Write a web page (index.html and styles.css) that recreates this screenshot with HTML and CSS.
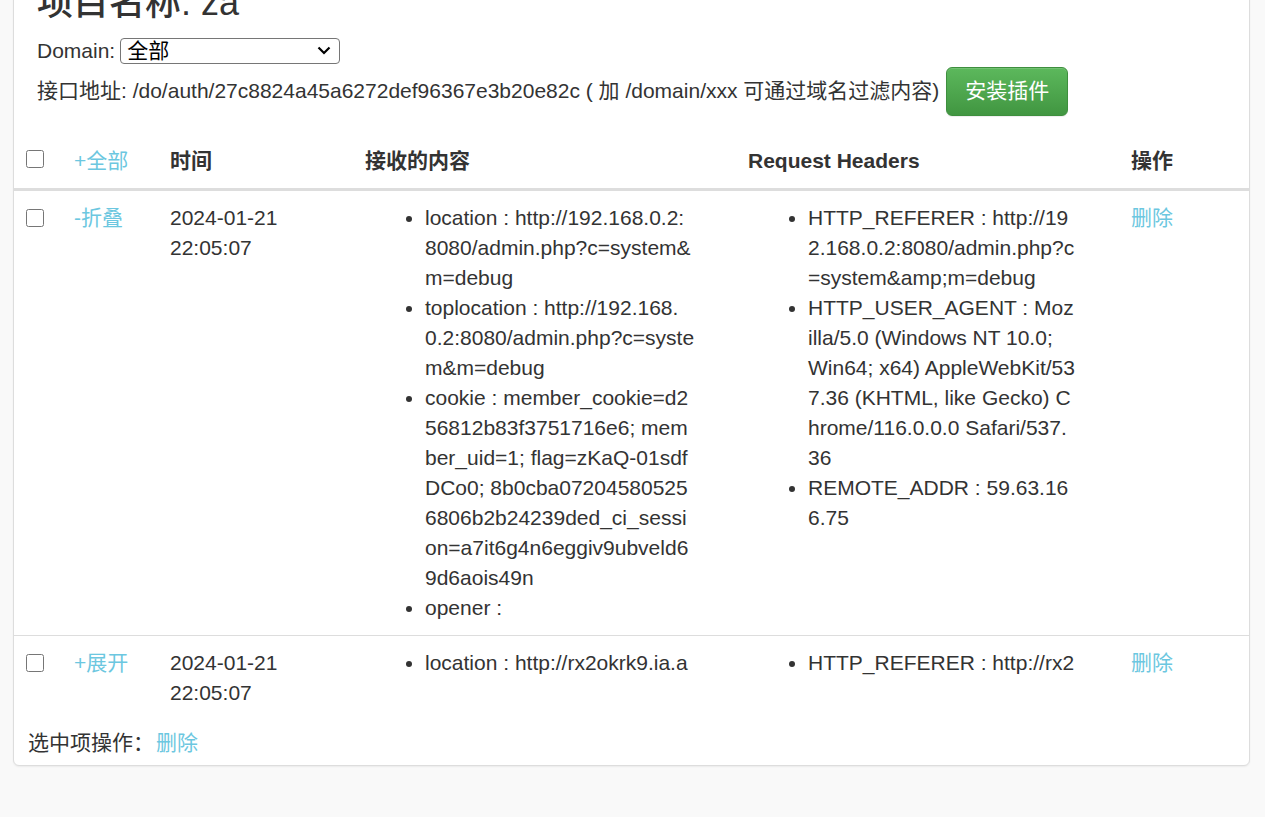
FILE: index.html
```html
<!DOCTYPE html>
<html lang="zh">
<head>
<meta charset="utf-8">
<title>项目名称: za</title>
<link rel="stylesheet" href="styles.css">
</head>
<body>
<div class="panel">
  <div class="panel-head">
    <h3 class="title">项目名称: za</h3>
    <div class="domain-row">
      <span>Domain:</span>
      <select class="domain-select">
        <option>全部</option>
      </select>
    </div>
    <div class="api-row">
      <span>接口地址: /do/auth/27c8824a45a6272def96367e3b20e82c ( 加 /domain/xxx 可通过域名过滤内容)</span>
      <a class="btn-success">安装插件</a>
    </div>
  </div>
  <table class="data-table">
    <colgroup>
      <col class="c-check">
      <col class="c-toggle">
      <col class="c-time">
      <col class="c-content">
      <col class="c-headers">
      <col class="c-op">
    </colgroup>
    <thead>
      <tr>
        <th class="th-check"><input type="checkbox" class="chk chk-head"></th>
        <th><a class="link">+全部</a></th>
        <th>时间</th>
        <th>接收的内容</th>
        <th>Request Headers</th>
        <th>操作</th>
      </tr>
    </thead>
    <tbody>
      <tr>
        <td><input type="checkbox" class="chk"></td>
        <td><a class="link">-折叠</a></td>
        <td>2024-01-21 22:05:07</td>
        <td>
          <ul class="kv">
            <li>location : http://192.168.0.2:8080/admin.php?c=system&amp;m=debug</li>
            <li>toplocation : http://192.168.0.2:8080/admin.php?c=system&amp;m=debug</li>
            <li>cookie : member_cookie=d256812b83f3751716e6; member_uid=1; flag=zKaQ-01sdfDCo0; 8b0cba072045805256806b2b24239ded_ci_session=a7it6g4n6eggiv9ubveld69d6aois49n</li>
            <li>opener : </li>
          </ul>
        </td>
        <td>
          <ul class="kv">
            <li>HTTP_REFERER : http://192.168.0.2:8080/admin.php?c=system&amp;amp;m=debug</li>
            <li>HTTP_USER_AGENT : Mozilla/5.0 (Windows NT 10.0; Win64; x64) AppleWebKit/537.36 (KHTML, like Gecko) Chrome/116.0.0.0 Safari/537.36</li>
            <li>REMOTE_ADDR : 59.63.166.75</li>
          </ul>
        </td>
        <td><a class="link">删除</a></td>
      </tr>
      <tr class="collapsed">
        <td><input type="checkbox" class="chk"></td>
        <td><a class="link">+展开</a></td>
        <td>2024-01-21 22:05:07</td>
        <td>
          <ul class="kv">
            <li>location : http://rx2okrk9.ia.ap/admin.php</li>
            <li>toplocation : http://rx2okrk9.ia.ap/</li>
          </ul>
        </td>
        <td>
          <ul class="kv">
            <li>HTTP_REFERER : http://rx2okrk9.ia.ap/</li>
          </ul>
        </td>
        <td><a class="link">删除</a></td>
      </tr>
    </tbody>
  </table>
  <div class="panel-foot">选中项操作：<a class="link foot-link">删除</a></div>
</div>
</body>
</html>
```

FILE: styles.css
```css
html, body {
  background: #f9f9f9;
}

body {
  margin: 0;
  font-family: "Liberation Sans", Arial, "Noto Sans CJK SC", sans-serif;
  font-size: 21px;
  line-height: 30px;
  color: #333;
}

.panel {
  margin: -40px 15px 30px 13px;
  background: #fff;
  border: 1px solid #ddd;
  border-radius: 6px;
  box-shadow: 0 1px 2px rgba(0, 0, 0, 0.06);
}

.panel-head {
  padding: 22px 23px 0;
}

.title {
  margin: 0 0 13px;
  font-size: 36px;
  line-height: 39.6px;
  font-weight: 500;
  color: #333;
}

.domain-row {
  display: flex;
  align-items: center;
  gap: 5px;
  height: 30px;
}

.domain-select {
  -webkit-appearance: none;
  appearance: none;
  box-sizing: border-box;
  width: 220px;
  height: 26px;
  padding: 0 30px 0 6px;
  font-family: "Liberation Sans", Arial, "Noto Sans CJK SC", sans-serif;
  font-size: 21px;
  line-height: 24px;
  color: #000;
  background-color: #fff;
  background-image: url("data:image/svg+xml;utf8,<svg xmlns='http://www.w3.org/2000/svg' width='14' height='9' viewBox='0 0 14 9'><path d='M1.5 1.5 L7 7 L12.5 1.5' fill='none' stroke='%23000' stroke-width='2.2'/></svg>");
  background-repeat: no-repeat;
  background-position: right 8px center;
  border: 1px solid #767676;
  border-radius: 4px;
}

.api-row {
  display: flex;
  align-items: center;
  gap: 7px;
  height: 51px;
  margin-bottom: 17px;
}

.btn-success {
  display: inline-flex;
  align-items: center;
  height: 49px;
  box-sizing: border-box;
  padding: 0 18px;
  color: #fff;
  font-size: 21px;
  background: linear-gradient(to bottom, #5cb85c 0%, #419641 100%);
  border: 1px solid #3e8f3e;
  border-radius: 6px;
  box-shadow: inset 0 1px 0 rgba(255, 255, 255, 0.15), 0 1px 1px rgba(0, 0, 0, 0.075);
  cursor: pointer;
}

.data-table {
  width: 100%;
  table-layout: fixed;
  border-collapse: collapse;
}

.c-check { width: 48px; }
.c-toggle { width: 96px; }
.c-time { width: 195px; }
.c-content { width: 383px; }
.c-headers { width: 383px; }
.c-op { width: 130px; }

.data-table th {
  padding: 12px;
  text-align: left;
  vertical-align: bottom;
  font-weight: bold;
  border-bottom: 3px solid #ddd;
}

.data-table th.th-check {
  vertical-align: top;
}

.data-table th .link {
  font-weight: normal;
}

.data-table td {
  padding: 12px;
  vertical-align: top;
  border-top: 1px solid #ddd;
}

.chk {
  display: block;
  width: 18px;
  height: 18px;
  margin: 6px 0 0;
}

.chk-head {
  margin-top: 4px;
}

.link {
  color: #6cc7e0;
  text-decoration: none;
  cursor: pointer;
}

.kv {
  margin: 0;
  padding: 0 0 0 60px;
  width: 269.9px;
  word-break: break-all;
}

.collapsed .kv {
  max-height: 30px;
  overflow: hidden;
}

.panel-foot {
  padding: 8px 14px 7px;
}

.foot-link {
  margin-left: 2px;
}
```
